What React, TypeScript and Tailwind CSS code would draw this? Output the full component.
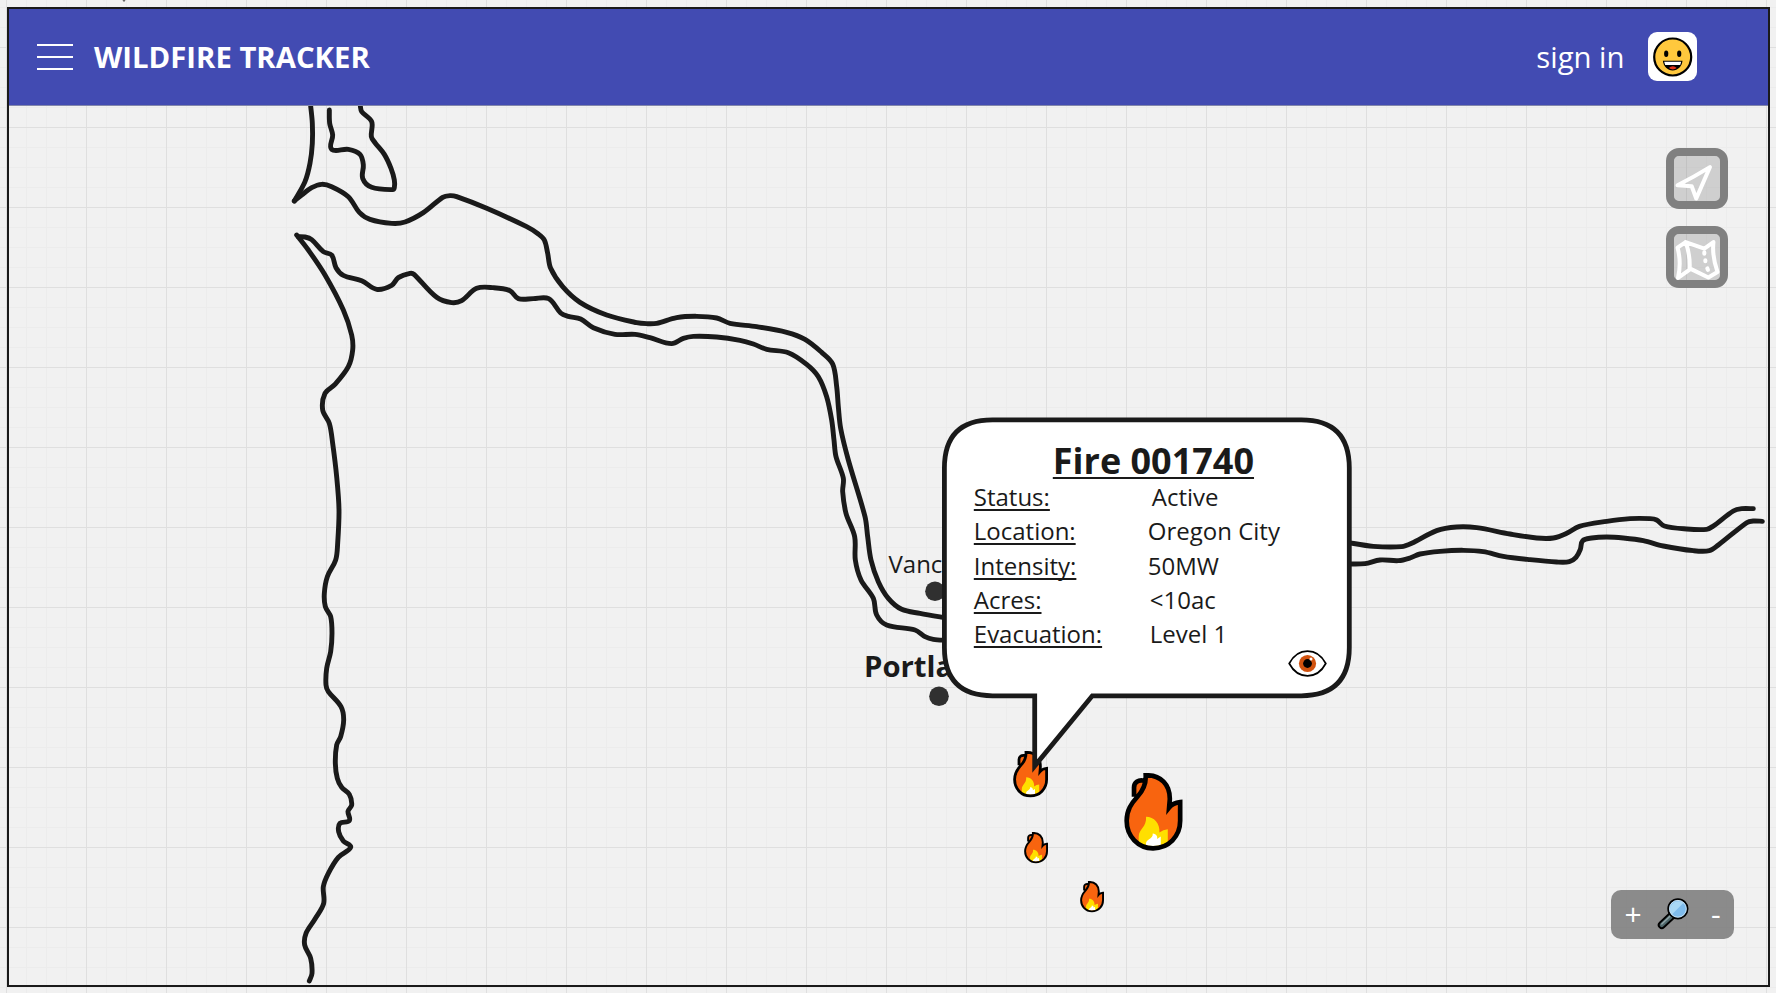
type Pt = [number, number];

/* Strokes are noted per map tile, at three units to the pixel. */
const tile = (ox: number, oy: number, pts: Pt[]): Pt[] =>
  pts.map(([x, y]) => [ox + x / 3, oy + y / 3]);

/* Smooth curve through all the points. */
const smooth = (pts: Pt[]): string => {
  let d = `M${pts[0][0]} ${pts[0][1]}`;
  for (let i = 0; i < pts.length - 1; i++) {
    const p0 = pts[i - 1] ?? pts[i];
    const p1 = pts[i];
    const p2 = pts[i + 1];
    const p3 = pts[i + 2] ?? p2;
    const len = Math.hypot(p2[0] - p1[0], p2[1] - p1[1]);
    const ctrl = (a: Pt, b: Pt, at: Pt, sign: number): Pt => {
      const l = Math.hypot(b[0] - a[0], b[1] - a[1]) || 1;
      const k = (sign * Math.min(len, l / 2 + len / 4) * 0.33) / l;
      return [at[0] + (b[0] - a[0]) * k, at[1] + (b[1] - a[1]) * k];
    };
    const c1 = ctrl(p0, p2, p1, 1);
    const c2 = ctrl(p1, p3, p2, -1);
    d += `C${c1[0].toFixed(2)} ${c1[1].toFixed(2)} ${c2[0].toFixed(2)} ${c2[1].toFixed(2)} ${p2[0].toFixed(2)} ${p2[1].toFixed(2)}`;
  }
  return d;
};

const strokes: Pt[][] = [
  tile(280, 100, [[92, 18], [97, 70], [97, 130], [90, 190], [75, 245], [43, 303]]),
  [
    ...tile(280, 100, [[43, 303], [65, 285], [95, 263], [125, 253], [155, 260], [205, 290], [238, 337], [270, 358], [335, 370], [375, 366], [430, 338], [488, 292], [510, 287], [530, 290], [620, 325], [740, 380], [775, 402], [793, 420], [803, 460], [812, 505], [848, 560]]),
    ...tile(540, 180, [[120, 367], [200, 405], [290, 428], [320, 431], [350, 430], [410, 413], [470, 409], [530, 414], [570, 430], [650, 440], [740, 457], [795, 478], [845, 517], [878, 552], [890, 620], [895, 680]]),
    ...tile(780, 360, [[182, 205], [205, 300], [255, 470], [263, 530], [273, 600], [295, 665], [325, 715], [365, 748], [420, 760], [500, 774]]),
  ],
  [
    ...tile(280, 100, [[55, 410], [75, 411], [95, 419], [130, 455], [155, 465], [168, 503], [190, 526], [245, 542], [290, 568], [335, 556], [355, 533], [390, 520], [402, 523], [470, 592], [515, 608], [545, 602], [590, 565], [640, 563], [690, 572], [715, 596], [760, 596], [806, 596]]),
    ...tile(540, 180, [[62, 399], [85, 409], [122, 417], [160, 443], [225, 463], [285, 463], [330, 473], [395, 491], [430, 475], [460, 469], [530, 471], [600, 481], [640, 492], [680, 508], [745, 518], [800, 553], [835, 590], [860, 650]]),
    ...tile(780, 360, [[155, 180], [162, 240], [168, 290], [190, 355], [188, 395], [198, 460], [224, 530], [226, 600], [243, 660], [280, 715], [290, 765], [320, 795], [405, 810], [435, 830], [460, 838], [500, 841]]),
  ],
  [
    ...tile(280, 100, [[50, 405], [85, 450], [135, 525], [190, 630], [215, 705], [218, 750], [205, 800], [165, 853], [135, 880], [128, 930]]),
    ...tile(280, 380, [[148, 130], [158, 190], [170, 290], [177, 390], [173, 490], [167, 540], [142, 590], [133, 640], [136, 680], [152, 710], [156, 760], [152, 815], [140, 865], [138, 915]]),
    ...tile(280, 680, [[145, 35], [183, 80], [191, 120], [182, 170], [170, 195], [166, 250], [172, 295], [185, 322], [208, 343], [215, 375], [204, 394], [208, 422], [180, 430], [176, 455], [190, 483], [212, 502], [175, 532], [145, 580], [130, 620], [131, 670], [105, 717], [78, 760], [74, 795], [92, 835], [96, 880], [88, 903]]),
  ],
  tile(280, 100, [[148, 30], [149, 70], [158, 105], [155, 148], [205, 148], [240, 163], [250, 195], [248, 235], [275, 262], [338, 269], [343, 263], [343, 240], [333, 205], [313, 163], [285, 128], [274, 110], [275, 65], [245, 35], [241, 18]]),
  tile(1330, 480, [[50, 187], [130, 199], [215, 200], [245, 190], [320, 152], [380, 141], [440, 143], [540, 162], [620, 174], [670, 174], [710, 160], [748, 139], [830, 124], [900, 116], [960, 116], [980, 120], [1003, 138], [1070, 147], [1130, 148], [1150, 138], [1210, 93], [1235, 86], [1270, 86]]),
  tile(1330, 480, [[50, 252], [105, 251], [150, 240], [205, 242], [240, 234], [270, 222], [330, 214], [400, 211], [460, 215], [520, 229], [600, 239], [680, 246], [718, 245], [738, 232], [751, 208], [758, 182], [785, 174], [830, 171], [880, 174], [940, 182], [1000, 198], [1090, 212], [1138, 212], [1165, 195], [1250, 128], [1270, 123], [1297, 124]]),
];

const range = (from: number, to: number, step: number) =>
  Array.from({ length: Math.floor((to - from) / step) + 1 }, (_, i) => from + i * step);

function MapCanvas() {
  return (
    <svg className="absolute inset-0" width={1776} height={993} viewBox="0 0 1776 993">
      <g fill="#ececec">
        {range(6, 1776, 20).map((x) => <rect key={x} x={x} y={0} width={1} height={993} />)}
        {range(7, 993, 20).map((y) => <rect key={y} x={0} y={y} width={1776} height={1} />)}
      </g>
      <g fill="#dfdfdf">
        {range(6, 1776, 80).map((x) => <rect key={x} x={x} y={0} width={1} height={993} />)}
        {range(47, 993, 80).map((y) => <rect key={y} x={0} y={y} width={1776} height={1} />)}
      </g>
      <path d="M122.6 0q1.4 2.6 2.8 0" fill="none" stroke="#222" strokeWidth={1} />
      <g fill="none" stroke="#1a1a1a" strokeWidth={4.9} strokeLinecap="round" strokeLinejoin="round">
        {strokes.map((s, i) => <path key={i} d={smooth(s)} />)}
      </g>
      <g fill="#303030">
        <circle cx={935} cy={591.3} r={9.8} />
        <circle cx={939} cy={696.3} r={9.8} />
      </g>
    </svg>
  );
}

function Flame({ className }: { className: string }) {
  return (
    <svg className={className} viewBox="402 277 175 233" preserveAspectRatio="none">
      <path
        d="M433 345V318C433 302 448 298 463 300L467 284C512 282 540 312 539 356L537 380Q548 366 570 364V420C570 466 536 502 489 502C444 502 410 466 410 420C410 388 424 366 440 346Z"
        fill="#f8640f"
      />
      <path
        d="M446 468C446 444 470 440 468 408C492 408 510 428 508 455Q519 446 533 445V482Q512 496 489 496Q462 496 446 482Z"
        fill="#ffdf00"
      />
      <path d="M468 493C464 474 490 476 488 458C499 460 503 467 501 474L512 467V492Q490 498 468 493Z" fill="#fff" />
      <path
        d="M467 284C512 282 540 312 539 356L537 380Q548 366 570 364V420C570 466 536 502 489 502C444 502 410 466 410 420C410 388 424 368 442 348C462 326 468 306 467 284ZM432 348V320C432 304 444 297 462 300"
        fill="none"
        stroke="#000"
        strokeWidth={14}
      />
    </svg>
  );
}

function Smiley() {
  return (
    <svg className="size-10" viewBox="0 0 40 40">
      <circle cx="19.700" cy="20" r="18.500" fill="#ffc83d" stroke="#000" strokeWidth="2.200" />
      <ellipse cx="13.200" cy="16.800" rx="2.100" ry="3.300" />
      <ellipse cx="26.200" cy="16.800" rx="2.100" ry="3.300" />
      <path d="M9.900 23.800h19.600c-.5 5.800-4.700 9.600-9.800 9.600s-9.300-3.800-9.800-9.600Z" fill="#000" />
      <path d="M11.200 24.800h17l-1 3.200H12.200Z" fill="#fff" />
      <path d="M15.900 31q1.600-1.800 3.900-1.800t3.900 1.800q-1.600 1.400-3.900 1.400t-3.900-1.400Z" fill="#e6331a" />
    </svg>
  );
}

function Eye() {
  return (
    <svg className="h-[27px] w-[39px]" viewBox="0 0 39 27">
      <path
        d="M1.200 13.500C5.500 5.500 11.500 1.200 19.500 1.200S33.500 5.500 37.800 13.500C33.500 21.500 27.500 25.800 19.500 25.800S5.500 21.500 1.200 13.500Z"
        fill="#fff"
        stroke="#000"
        strokeWidth="1.700"
      />
      <circle cx="19.500" cy="13.500" r="8.600" fill="#d1520f" />
      <circle cx="19.500" cy="13.500" r="4.400" fill="#000" />
      <circle cx="23" cy="9" r="1.500" fill="#fff" />
    </svg>
  );
}

function Magnifier() {
  return (
    <svg className="size-8" viewBox="0 0 32 32">
      <path d="M4.800 27 16 16.500" stroke="#000" strokeWidth="8" strokeLinecap="round" />
      <path d="M4.800 27 15 17.400" stroke="#4f676b" strokeWidth="4.200" strokeLinecap="round" />
      <path d="M4.800 26 14 17.300" stroke="#8fa3a6" strokeWidth="1.500" strokeLinecap="round" />
      <circle cx="20.900" cy="10.800" r="9.700" fill="#7fbcec" stroke="#000" strokeWidth="1.800" />
      <path d="M14.700 16.800A8.500 8.500 0 0 1 26.500 4.800Z" fill="#a9d8f5" />
      <circle cx="20.900" cy="10.800" r="8.400" fill="none" stroke="#cfe4f2" strokeWidth=".9" />
    </svg>
  );
}

const details = [
  { label: "Status:", value: "Active", pad: "pl-1" },
  { label: "Location:", value: "Oregon City", pad: "pl-0" },
  { label: "Intensity:", value: "50MW", pad: "pl-0" },
  { label: "Acres:", value: "<10ac", pad: "pl-[2px]" },
  { label: "Evacuation:", value: "Level 1", pad: "pl-[2px]" },
];

function FireCallout() {
  return (
    <section className="absolute left-[941px] top-[417px] h-[365px] w-[412px]">
      <svg className="absolute inset-0" width={412} height={365} viewBox="941 417 412 365">
        <path
          d="M992.500 419.800H1301.200Q1349.300 419.800 1349.300 468V647.600Q1349.300 695.800 1301.200 695.800H1092.300L1034.700 766V695.800H992.500Q944.400 695.800 944.400 647.600V468Q944.400 419.800 992.500 419.800Z"
          fill="#fff"
          stroke="#1a1a1a"
          strokeWidth={4.800}
          strokeMiterlimit={10}
        />
      </svg>
      <div className="relative flex flex-col pl-[32.800px] pr-[26.500px] pt-[25px]">
        <h2 className="self-start pl-[79px] text-[36px] font-bold leading-[38px] underline decoration-[2px] underline-offset-[3px]">
          Fire 001740
        </h2>
        <dl className="grid grid-cols-[174px_1fr] text-[24px] leading-[34.250px]">
          {details.map((d) => (
            <div key={d.label} className="contents">
              <dt className="underline decoration-[1.500px] underline-offset-[3px] [text-decoration-skip-ink:none]">{d.label}</dt>
              <dd className={d.pad}>{d.value}</dd>
            </div>
          ))}
        </dl>
        <div className="-mt-px flex justify-end">
          <Eye />
        </div>
      </div>
    </section>
  );
}

export default function App() {
  return (
    <div className="relative flex h-[993px] w-[1776px] overflow-hidden bg-[#f1f1f1] pb-[6px] pl-[7px] pr-[6px] pt-[7px] font-['Open_Sans','Noto_Sans',sans-serif] text-[#1a1a1a]">
      <MapCanvas />
      <p className="absolute left-[888.500px] top-[547px] text-[24px] leading-[34px]">Vanc</p>
      <p className="absolute left-[864px] top-[646px] text-[29.300px] font-bold leading-[40px]">Portla</p>
      <Flame className="absolute left-[1124px] top-[772.500px] h-[78px] w-[58.500px]" />
      <Flame className="absolute left-[1013px] top-[751px] h-[46.500px] w-[35px]" />
      <Flame className="absolute left-[1023.500px] top-[832px] h-[31.500px] w-[24px]" />
      <Flame className="absolute left-[1080px] top-[881px] h-[31.500px] w-[24px]" />
      <FireCallout />
      <div className="relative flex flex-1 flex-col border-2 border-[#1a1a1a]">
        <header className="flex h-[97px] shrink-0 items-center border-b border-[#8287ab] bg-[#424bb2] pb-px pl-[28px] pr-[71px] text-white">
          <button aria-label="Menu" className="flex w-9 flex-col gap-[10px]">
            <span className="h-[2px] bg-white" />
            <span className="h-[2px] bg-white" />
            <span className="h-[2px] bg-white" />
          </button>
          <h1 className="pl-[21px] pt-[2px] text-[29.300px] font-bold">WILDFIRE TRACKER</h1>
          <span className="ml-auto pt-[2px] text-[29.300px]">sign in</span>
          <span className="ml-[23.500px] flex size-[49px] items-center justify-center rounded-[9px] bg-white">
            <Smiley />
          </span>
        </header>
        <div className="flex flex-1 flex-col items-end justify-between pb-[46px] pr-[34px] pt-[41.500px]">
          <div className="flex flex-col gap-[17px] pr-[6.500px]">
            <button aria-label="My location" className="size-[61.500px] rounded-[13px] border-8 border-[#808080] bg-[#808080]/30 bg-clip-padding">
              <svg className="size-full" viewBox="0 0 45 45" fill="none" stroke="#fff" strokeWidth="4" strokeLinecap="round" strokeLinejoin="round">
                <path d="M35.500 11 22 42l-4.500-12L3.500 29Q20 20.500 35.500 11Z" />
              </svg>
            </button>
            <button aria-label="Map layers" className="size-[61.500px] rounded-[13px] border-8 border-[#808080] bg-[#808080]/30 bg-clip-padding">
              <svg className="size-full" viewBox="0 0 45 45" fill="none" stroke="#fff" strokeWidth="4" strokeLinecap="round" strokeLinejoin="round">
                <path d="M11.500 8 3.500 13.500Q7.500 28 4 43.500L16.500 34.500 34 43 43 37.500Q37.500 22 39 8L30 14.500 11.500 8Q16 20 15.500 34" />
                <path d="M30 18v1.500M31 26v1M33 34l.5 1.500" />
              </svg>
            </button>
          </div>
          <div className="flex h-[49.500px] w-[123px] items-center rounded-[10px] bg-[#808080]/90 pl-3 text-[30px] text-white">
            <button className="w-[20px] pb-px text-center leading-none">+</button>
            <span className="ml-[13.500px]"><Magnifier /></span>
            <button className="ml-[22.500px] leading-none">-</button>
          </div>
        </div>
      </div>
    </div>
  );
}
